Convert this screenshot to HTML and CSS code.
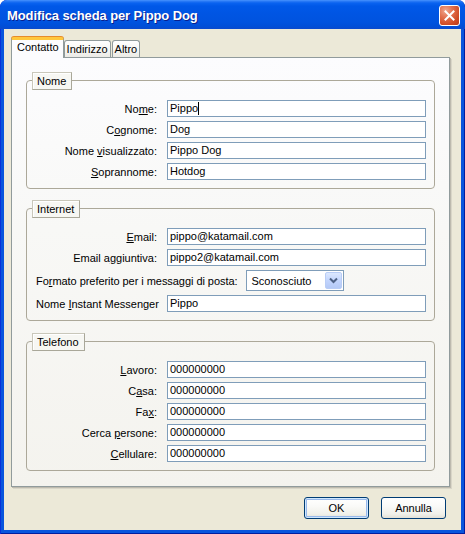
FILE: index.html
```html
<!DOCTYPE html>
<html lang="it">
<head>
<meta charset="utf-8">
<title>Modifica scheda per Pippo Dog</title>
<link rel="stylesheet" href="styles.css">
</head>
<body>
<div class="window">
  <div class="titlebar">
    <span class="title">Modifica scheda per Pippo Dog</span>
    <span class="close"><svg width="13" height="13" viewBox="0 0 13 13"><path d="M2.5 2.5 L10.5 10.5 M10.5 2.5 L2.5 10.5" stroke="#fff" stroke-width="2" stroke-linecap="square"/></svg></span>
  </div>
  <div class="client">
    <div class="tabs">
      <div class="tab active">Contatto</div>
      <div class="tab">Indirizzo</div>
      <div class="tab">Altro</div>
    </div>
    <div class="panel">
      <div class="group">
        <div class="legend">Nome</div>
        <div class="gbox">
          <label class="lbl">No<u>m</u>e:</label><div class="input">Pippo<span class="caret"></span></div>
          <label class="lbl">C<u>o</u>gnome:</label><div class="input">Dog</div>
          <label class="lbl">Nome <u>v</u>isualizzato:</label><div class="input">Pippo Dog</div>
          <label class="lbl"><u>S</u>oprannome:</label><div class="input">Hotdog</div>
        </div>
      </div>
      <div class="group">
        <div class="legend">Internet</div>
        <div class="gbox">
          <label class="lbl"><u>E</u>mail:</label><div class="input">pippo@katamail.com</div>
          <label class="lbl">Email a<u>g</u>giuntiva:</label><div class="input">pippo2@katamail.com</div>
          <div class="wide">
            <label class="lbl-left">Fo<u>r</u>mato preferito per i messaggi di posta:</label>
            <div class="select"><span class="sel-text">Sconosciuto</span><span class="sel-btn"><svg width="9" height="7" viewBox="0 0 9 7"><path d="M1 1.5 L4.5 5 L8 1.5" fill="none" stroke="#4D6185" stroke-width="2"/></svg></span></div>
          </div>
          <label class="lbl">Nome <u>I</u>nstant Messenger</label><div class="input">Pippo</div>
        </div>
      </div>
      <div class="group third">
        <div class="legend">Telefono</div>
        <div class="gbox">
          <label class="lbl"><u>L</u>avoro:</label><div class="input">000000000</div>
          <label class="lbl">C<u>a</u>sa:</label><div class="input">000000000</div>
          <label class="lbl">Fa<u>x</u>:</label><div class="input">000000000</div>
          <label class="lbl">Cerca <u>p</u>ersone:</label><div class="input">000000000</div>
          <label class="lbl"><u>C</u>ellulare:</label><div class="input">000000000</div>
        </div>
      </div>
    </div>
    <div class="buttons">
      <div class="btn default">OK</div>
      <div class="btn">Annulla</div>
    </div>
  </div>
</div>
</body>
</html>
```

FILE: styles.css
```css
html, body {
  margin: 0;
  padding: 0;
  background: #ffffff;
}

body {
  font-family: "Liberation Sans", Arial, sans-serif;
  font-size: 11px;
  color: #000;
}

.window {
  width: 465px;
  height: 534px;
  box-sizing: border-box;
  display: flex;
  flex-direction: column;
  border-radius: 7px 7px 0 0;
  background: #0855DD;
  box-shadow: inset 1px 0 0 #0831D9, inset -1px -1px 0 #001EA0;
  overflow: hidden;
}

.titlebar {
  height: 29px;
  flex: none;
  display: flex;
  align-items: center;
  justify-content: space-between;
  padding: 0 5px 0 7px;
  background: linear-gradient(180deg, #4A96FF 0px, #2E7DF7 1px, #0A63F0 3px, #0058E8 6px, #0055E3 14px, #0053DF 22px, #004FD8 26px, #0A4ACD 29px);
  border-radius: 7px 7px 0 0;
}

.title {
  color: #fff;
  font-weight: bold;
  font-size: 13px;
  letter-spacing: -0.1px;
  text-shadow: 1px 1px 0 #0A1E8C;
  margin-top: 1px;
}

.close {
  width: 21px;
  height: 21px;
  box-sizing: border-box;
  border: 1px solid #fff;
  border-radius: 3px;
  background: radial-gradient(circle at 30% 25%, #F0A890 0%, #E27150 35%, #D04C26 70%, #B93A1A 100%);
  display: flex;
  align-items: center;
  justify-content: center;
  margin-top: 2px;
}

.client {
  flex: 1;
  margin: 0 4px 4px 4px;
  background: #ECE9D8;
  padding: 8px 11px 0 7px;
  display: flex;
  flex-direction: column;
}

.tabs {
  display: flex;
  align-items: flex-end;
  height: 20px;
}

.tab {
  height: 17px;
  box-sizing: border-box;
  border: 1px solid #919B9C;
  border-bottom: none;
  border-radius: 3px 3px 0 0;
  background: linear-gradient(180deg, #FFFFFF 0%, #F7F7F4 50%, #ECEBE6 100%);
  padding: 2px 2px 0 2px;
  line-height: 13px;
  margin-right: 1px;
}

.tab.active {
  height: 21px;
  margin-bottom: -1px;
  margin-right: 0;
  position: relative;
  z-index: 2;
  background: #FCFCFE;
  border-top: 3px solid #FFC73C;
  box-shadow: 0 -1px 0 #E68B2C;
  padding: 1px 4px 0 5px;
}

.panel {
  border: 1px solid #919B9C;
  background: linear-gradient(180deg, #FCFCFE 0%, #F8F8F6 40%, #F4F3EE 100%);
  box-shadow: 1px 1px 0 #BDBAAE, 2px 2px 0 #D9D6C8;
  padding: 14px 14px 15px 14px;
  display: flex;
  flex-direction: column;
  gap: 11px;
}

.group {
  display: flex;
  flex-direction: column;
}

.group.third {
  margin-top: 1px;
}

.legend {
  align-self: flex-start;
  position: relative;
  z-index: 1;
  margin-left: 6px;
  margin-bottom: -10px;
  height: 18px;
  box-sizing: border-box;
  padding: 2px 5px 0 4px;
  line-height: 13px;
  background: #F7F7F3;
  border: 1px solid #C9C7BA;
  border-right-color: #A9A799;
  border-bottom-color: #A9A799;
  box-shadow: inset 1px 1px 0 #fff;
}

.gbox {
  border: 1px solid #ACA899;
  border-radius: 4px;
  padding: 19px 8px 8px 9px;
  display: grid;
  grid-template-columns: 121px 1fr;
  column-gap: 10px;
  row-gap: 4px;
  align-items: center;
}

.lbl {
  text-align: right;
  white-space: nowrap;
}

.input {
  height: 17px;
  box-sizing: border-box;
  border: 1px solid #7F9DB9;
  background: #fff;
  padding: 0 2px;
  line-height: 15px;
  white-space: nowrap;
}

.caret {
  display: inline-block;
  width: 1px;
  height: 13px;
  background: #000;
  vertical-align: -3px;
}

.wide {
  grid-column: 1 / 3;
  display: flex;
  align-items: center;
  gap: 8px;
}

.lbl-left {
  white-space: nowrap;
  letter-spacing: -0.05px;
}

.select {
  width: 98px;
  height: 21px;
  box-sizing: border-box;
  border: 1px solid #7F9DB9;
  background: #fff;
  display: flex;
  align-items: center;
  justify-content: space-between;
  padding: 1px;
}

.sel-text {
  padding-left: 4px;
}

.sel-btn {
  width: 17px;
  height: 17px;
  box-sizing: border-box;
  border: 1px solid #B9CDF6;
  border-radius: 2px;
  background: linear-gradient(180deg, #DCE8FE 0%, #C3D5FD 50%, #B4C9F6 100%);
  display: flex;
  align-items: center;
  justify-content: center;
}

.buttons {
  display: flex;
  justify-content: flex-end;
  gap: 12px;
  margin-top: 10px;
  margin-right: 4px;
}

.btn {
  width: 65px;
  height: 22px;
  box-sizing: border-box;
  border: 1px solid #003C74;
  border-radius: 3px;
  background: linear-gradient(180deg, #FFFFFF 0%, #FAFAF8 40%, #F0F0EA 80%, #E3E0D6 100%);
  display: flex;
  align-items: center;
  justify-content: center;
}

.btn.default {
  box-shadow: inset 0 0 0 1px #CEE7FF, inset 0 0 0 2px #98B8EA;
}
```
